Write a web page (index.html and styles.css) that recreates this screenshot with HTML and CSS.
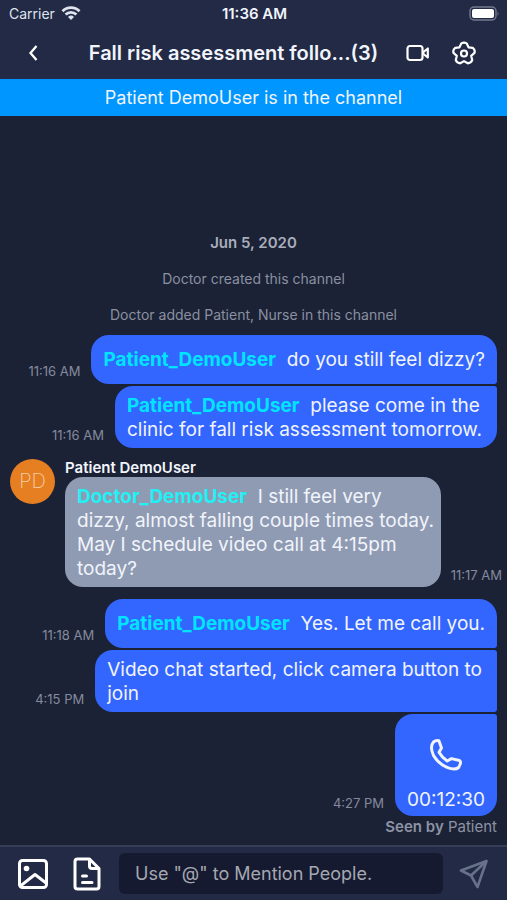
FILE: index.html
```html
<!DOCTYPE html>
<html lang="en">
<head>
<meta charset="utf-8">
<meta name="viewport" content="width=device-width, initial-scale=1">
<title>Fall risk assessment</title>
<link rel="stylesheet" href="styles.css">
</head>
<body>
<header class="top">
  <div class="status">
    <div class="carrier">
      <span>Carrier</span>
      <svg width="20" height="15" viewBox="0 0 20 15" fill="none" stroke="currentColor" stroke-width="2.8" aria-hidden="true"><path d="M1.5 5.2a12 12 0 0 1 17 0M4.6 8.6a7.6 7.6 0 0 1 10.8 0"/><path d="M10 14l-3-3.1a4.3 4.3 0 0 1 6 0z" fill="currentColor" stroke="none"/></svg>
    </div>
    <span class="clock">11:36 AM</span>
    <svg class="battery" width="31" height="15" viewBox="0 0 31 15" aria-hidden="true"><rect x="1" y="1" width="26" height="13" rx="4" fill="none" stroke="#747a8c" stroke-width="1.4"/><rect x="3" y="3" width="22" height="9" rx="2" fill="#fff"/><path d="M28.6 5q1.8 2.5 0 5z" fill="#747a8c"/></svg>
  </div>
  <nav class="nav">
    <button class="icon" aria-label="Back"><svg width="12" height="18" viewBox="0 0 12 18" fill="none" stroke="currentColor" stroke-width="2.3"><path d="M9.5 2 3.5 9l6 7"/></svg></button>
    <h1>Fall risk assessment follo...(3)</h1>
    <div class="actions">
      <button class="icon" aria-label="Video call"><svg width="24" height="18" viewBox="0 0 24 18" fill="none" stroke="currentColor" stroke-width="2.2" stroke-linejoin="round"><rect x="1.5" y="2" width="15" height="14" rx="2.5"/><path d="M17.500 8 21.800 4.500v9L17.500 10z"/></svg></button>
      <button class="icon" aria-label="Settings"><svg width="24" height="24" viewBox="0 0 24 24" fill="none" stroke="currentColor" stroke-width="2.2" stroke-linejoin="round"><path d="M9.300 2.400Q12 .8 14.700 2.400L16.500 6.300 20.800 6.800Q23.400 8.800 22.500 11.900L19.200 14.800 20.200 19.100Q19 22.200 15.800 22.300L12 20.100 8.200 22.300Q5 22.200 3.800 19.100L4.800 14.800 1.500 11.900Q.6 8.800 3.200 6.800L7.500 6.300z"/><circle cx="12" cy="12.500" r="3"/></svg></button>
    </div>
  </nav>
  <p class="banner">Patient DemoUser is in the channel</p>
</header>

<main class="chat">
  <h2 class="date">Jun 5, 2020</h2>
  <p class="event">Doctor created this channel</p>
  <p class="event">Doctor added Patient, Nurse in this channel</p>

  <div class="row">
    <time>11:16 AM</time>
    <p class="bubble first"><b>Patient_DemoUser</b>&nbsp; do you still feel dizzy?</p>
  </div>
  <div class="row">
    <time>11:16 AM</time>
    <p class="bubble last wrapped"><b>Patient_DemoUser</b>&nbsp; please come in the<br>clinic for fall risk assessment tomorrow.</p>
  </div>

  <div class="incoming">
    <div class="avatar">PD</div>
    <div class="body">
      <div class="author">Patient DemoUser</div>
      <div class="row in">
        <p class="bubble gray"><b>Doctor_DemoUser</b>&nbsp; I still feel very<br>dizzy, almost falling couple times today.<br>May I schedule video call at 4:15pm<br>today?</p>
        <time>11:17 AM</time>
      </div>
    </div>
  </div>

  <div class="row">
    <time>11:18 AM</time>
    <p class="bubble first"><b>Patient_DemoUser</b>&nbsp; Yes. Let me call you.</p>
  </div>
  <div class="row">
    <time>4:15 PM</time>
    <p class="bubble middle wrapped">Video chat started, click camera button to<br>join</p>
  </div>
  <div class="row">
    <time>4:27 PM</time>
    <div class="bubble last call">
      <svg width="34" height="34" viewBox="0 0 34 34" fill="none" stroke="currentColor" stroke-width="3" stroke-linejoin="round" aria-hidden="true"><path d="M4.500 4Q7 1.800 9.800 2.600L12.500 10 10 14.200Q13 19.500 18.200 23L22.500 20.600 30.500 22.500Q33 23.800 29.600 29.500 26 32.600 18 29.300 9 25.500 4.500 17.500.5 8.500 4.500 4z"/></svg>
      <span>00:12:30</span>
    </div>
  </div>
  <p class="seen"><strong>Seen by</strong> Patient</p>
</main>

<form class="composer">
  <button type="button" class="icon" aria-label="Send image"><svg width="32" height="32" viewBox="0 0 32 32" fill="none" stroke="currentColor" stroke-width="3" stroke-linejoin="round" stroke-linecap="round"><rect x="2.5" y="2.5" width="27" height="27" rx="3"/><path d="M4 27.500 18 16.500 29 25"/><circle cx="9.5" cy="10.500" r="2.800" fill="currentColor" stroke="none"/></svg></button>
  <button type="button" class="icon" aria-label="Send file"><svg width="28" height="34" viewBox="0 0 28 34" fill="none" stroke="currentColor" stroke-width="3" stroke-linejoin="round" stroke-linecap="round"><path d="M16.500 2H4.500Q2 2 2 4.500v25Q2 32 4.500 32h19q2.500 0 2.500-2.500V11.500z"/><path d="M16.500 2.500V9q0 2.500 2.500 2.500h6M9.500 19h4M9.500 25.500h9.500"/></svg></button>
  <input type="text" aria-label="Message" placeholder='Use "@" to Mention People.'>
  <button type="submit" class="icon send" aria-label="Send"><svg width="30" height="30" viewBox="0 0 30 30" fill="none" stroke="currentColor" stroke-width="2.600" stroke-linejoin="round"><path d="M27.500 2 2 11.500l10 5L18.500 28z"/><path d="M27.500 2 12 16.500"/></svg></button>
</form>
</body>
</html>
```
FILE: styles.css
```css
* { box-sizing: border-box; }
body {
  margin: 0;
  min-height: 100vh;
  display: flex;
  flex-direction: column;
  background: #1b2236;
  color: #f1f4fb;
  font-family: Inter, "Liberation Sans", sans-serif;
}
h1, h2, p { margin: 0; }
svg { display: block; }
.icon {
  padding: 0;
  border: 0;
  background: none;
  color: #fff;
}
.top { background: #222a45; }
.status {
  display: grid;
  grid-template-columns: 1fr auto 1fr;
  align-items: center;
  height: 26px;
  padding: 0 7px 0 9px;
  font-size: 14px;
}
.carrier {
  display: flex;
  align-items: center;
  gap: 6px;
  color: #dfe3ee;
}
.clock {
  font-size: 15px;
  font-weight: 600;
}
.battery { justify-self: end; }
.nav {
  display: flex;
  align-items: center;
  height: 53px;
  padding: 0 31px 0 27px;
}
.nav h1 {
  flex: 1;
  padding-left: 22px;
  text-align: center;
  font-size: 20px;
  font-weight: 600;
  white-space: nowrap;
}
.actions {
  display: flex;
  align-items: center;
  gap: 22px;
}
.banner {
  height: 37px;
  line-height: 37px;
  background: #0096ff;
  text-align: center;
  font-size: 18px;
}
.chat {
  flex: 1;
  display: flex;
  flex-direction: column;
  justify-content: flex-end;
  gap: 2px;
  padding: 16px 10px 10px;
}
.date, .event {
  padding-bottom: 16px;
  text-align: center;
  line-height: 18px;
  font-size: 14px;
  font-weight: 400;
  color: #8a90a0;
}
.date {
  font-size: 15px;
  font-weight: 600;
  color: #a8adba;
}
.event + .row { margin-top: -7px; }
.row {
  display: flex;
  justify-content: flex-end;
  align-items: flex-end;
  gap: 11px;
}
time {
  padding-bottom: 5px;
  line-height: 16px;
  font-size: 13px;
  color: #858b9d;
  white-space: nowrap;
}
.bubble {
  padding: 8px 12px 6px;
  border-radius: 18px;
  background: #3366ff;
  line-height: 24px;
  font-size: 19px;
}
.bubble b {
  font-weight: 700;
  color: #00e5ff;
}
.first {
  padding: 13px 12px 12px;
  border-bottom-right-radius: 3px;
}
.middle {
  border-top-right-radius: 3px;
  border-bottom-right-radius: 3px;
}
.last { border-top-right-radius: 3px; }
.wrapped { padding-right: 15px; }
.incoming {
  display: flex;
  gap: 10px;
  margin: 9px -5px 10px 0;
}
.avatar {
  flex: none;
  width: 45px;
  height: 45px;
  border-radius: 50%;
  background: #e67e22;
  color: #f6cfa8;
  text-align: center;
  line-height: 45px;
  font-size: 20px;
  font-weight: 200;
}
.body { flex: 1; }
.author {
  line-height: 18px;
  font-size: 15px;
  font-weight: 600;
}
.in {
  justify-content: space-between;
  gap: 8px;
}
.in time { padding-bottom: 4px; }
.gray {
  padding-right: 7px;
  background: #8f9bb3;
}
.gray b { color: #22f0f5; }
.call {
  display: flex;
  flex-direction: column;
  align-items: center;
  gap: 16px;
  padding: 24px 12px 4px;
}
.seen {
  line-height: 17px;
  text-align: right;
  font-size: 15px;
  color: #8d93a3;
}
.seen strong { font-weight: 600; }
.composer {
  display: flex;
  align-items: center;
  height: 55px;
  padding: 0 18px 0 17px;
  border-top: 2px solid #363d56;
  background: #222a45;
}
.composer .icon + .icon { margin: 0 18px 0 24px; }
.composer input {
  flex: 1;
  min-width: 0;
  height: 41px;
  padding: 0 16px;
  border: 0;
  border-radius: 6px;
  background: #151a30;
  color: #fff;
  font: 400 18px Inter, "Liberation Sans", sans-serif;
}
.composer input::placeholder {
  color: #a6a8b0;
  opacity: 1;
}
.composer .send {
  margin-left: 16px;
  color: #68718a;
}
```
